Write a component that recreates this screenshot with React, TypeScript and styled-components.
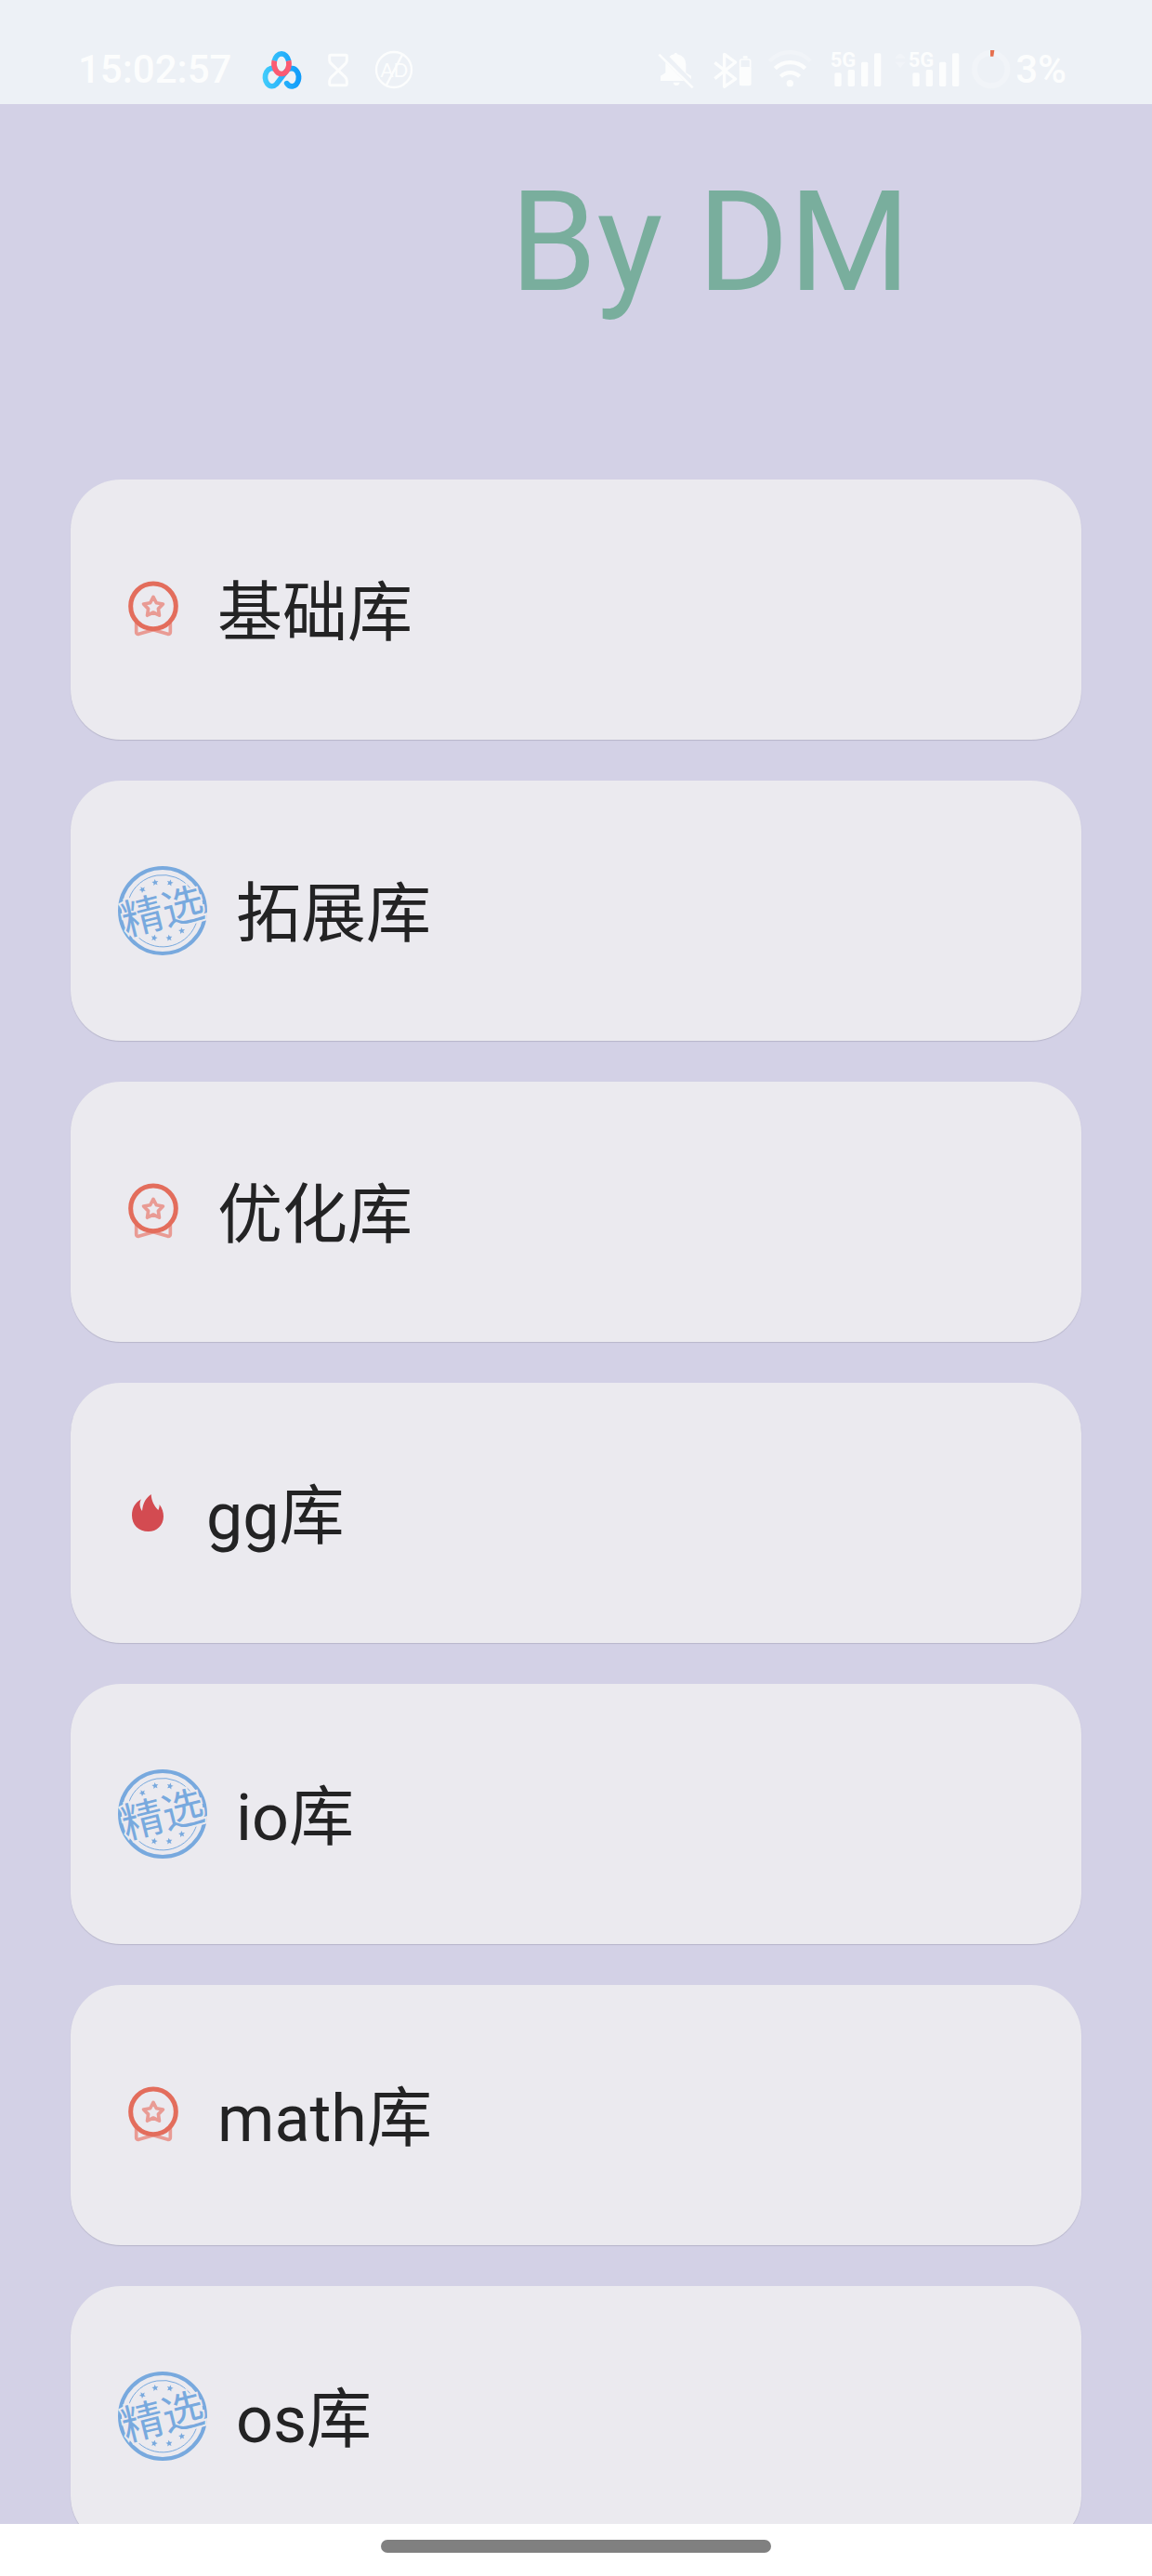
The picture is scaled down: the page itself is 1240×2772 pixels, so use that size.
import React from "react";
import styled, { createGlobalStyle } from "styled-components";

const ink = "#fcfdfd";
const cardColor = "#ebeaef";
const stampColor = "#78a9de";

const GlobalStyle = createGlobalStyle`
  *, *::before, *::after { box-sizing: border-box; }
  body { margin: 0; background: #ffffff; font-family: Roboto, "Noto Sans CJK SC", sans-serif; }
`;

const Screen = styled.div`
  display: flex;
  flex-direction: column;
  height: 100vh;
  background: #d3d1e6;
`;

const StatusBar = styled.header`
  display: flex;
  flex: none;
  justify-content: space-between;
  align-items: center;
  height: 112px;
  padding: 38px 92px 0 84px;
  background: #edf1f6;
  color: ${ink};
  font-size: 42px;
  font-weight: 500;
  line-height: 44px;
`;

const StatusGroup = styled.div<{ $gap: number }>`
  display: flex;
  align-items: center;
  gap: ${(p) => p.$gap}px;
`;

const Glyph = styled.svg<{ $width: number }>`
  display: block;
  flex: none;
  width: ${(p) => p.$width}px;
  height: 44px;
  overflow: visible;
`;

const Content = styled.main`
  flex: 1;
  min-height: 0;
  overflow-y: auto;
  scrollbar-width: none;
  padding: 0 76px;
`;

const Title = styled.h1`
  margin: 0;
  padding: 61px 0 167px 473px;
  color: #79ae9d;
  font-size: 150px;
  font-weight: 400;
  line-height: 176px;
  white-space: nowrap;
`;

const CardList = styled.ul`
  display: flex;
  flex-direction: column;
  gap: 44px;
  margin: 0;
  padding: 0;
  list-style: none;
`;

const Card = styled.button`
  display: flex;
  align-items: center;
  gap: 31px;
  width: 100%;
  height: 280px;
  padding: 0 51px;
  border: 0;
  border-radius: 54px;
  background: ${cardColor};
  box-shadow: 0 1px 1px rgba(60, 60, 80, 0.18);
  color: #232324;
  font-family: inherit;
  font-size: 70px;
  line-height: 84px;
  text-align: left;
  cursor: pointer;
`;

const CardLabel = styled.span`
  padding-top: 8px;
`;

const CardIcon = styled.svg<{ $size: number }>`
  display: block;
  flex: none;
  width: ${(p) => p.$size}px;
  height: ${(p) => p.$size}px;
  overflow: visible;
`;

const NavBar = styled.footer`
  display: flex;
  flex: none;
  justify-content: center;
  height: 56px;
  padding-top: 17px;
  background: #ffffff;
`;

const Handle = styled.div`
  width: 420px;
  height: 14px;
  border-radius: 7px;
  background: #808080;
`;

function starPoints(cx: number, cy: number, outer: number, inner: number, turn = 0) {
  return Array.from({ length: 10 }, (_, i) => {
    const r = i % 2 ? inner : outer;
    const a = ((i * 36 - 90 + turn) * Math.PI) / 180;
    return `${(cx + r * Math.cos(a)).toFixed(1)},${(cy + r * Math.sin(a)).toFixed(1)}`;
  }).join(" ");
}

function MedalIcon() {
  return (
    <CardIcon $size={76} viewBox="51 54 228 228" fill="none" aria-hidden="true">
      <path
        d="M110 208V240Q110 248 118 247L165 233L212 247Q220 248 220 240V208"
        stroke="#e99b94"
        strokeWidth="11"
        strokeLinejoin="round"
      />
      <circle cx="165" cy="157" r="73" stroke="#e36d5c" strokeWidth="15" />
      <polygon
        points={starPoints(165, 160, 33, 17)}
        stroke="#e99b94"
        strokeWidth="11"
        strokeLinejoin="round"
      />
    </CardIcon>
  );
}

const stampStars = [
  [130, 172, -30],
  [171, 149, -8],
  [219, 150, 14],
  [168, 328, 14],
  [216, 328, -8],
  [257, 305, -8],
];

function StampIcon() {
  return (
    <CardIcon $size={96} viewBox="51 96 288 288" fill="none" aria-hidden="true">
      <circle cx="195" cy="240" r="138" stroke={stampColor} strokeWidth="12" />
      <path
        d="M87 200A115 115 0 0 1 285 168M118 327A115 115 0 0 0 306 272"
        stroke={stampColor}
        strokeWidth="3"
      />
      {stampStars.map(([x, y, turn]) => (
        <polygon key={`${x}-${y}`} points={starPoints(x, y, 11, 5, turn)} fill={stampColor} />
      ))}
      <text
        x="195"
        y="290"
        textAnchor="middle"
        transform="rotate(-14 195 240)"
        fontFamily='"Noto Sans CJK SC", sans-serif'
        fontSize="134"
        fill={stampColor}
        stroke={cardColor}
        strokeWidth="12"
        paintOrder="stroke"
      >
        精选
      </text>
    </CardIcon>
  );
}

function FlameIcon() {
  return (
    <CardIcon $size={64} viewBox="51 108 192 192" aria-hidden="true">
      <path
        fill="#d34b51"
        d="M126 160C119 172 121 187 129 198C131 172 142 155 158 144C159 165 168 182 181 195C184 189 185 184 185 177C194 189 198 203 198 215C198 244 176 264 149 264C118 264 96 242 96 212C96 189 107 170 126 160Z"
      />
    </CardIcon>
  );
}

function CloudDiskGlyph() {
  return (
    <Glyph $width={44} viewBox="658 66 132 132" fill="none" aria-hidden="true">
      <defs>
        <linearGradient id="disk" gradientUnits="userSpaceOnUse" x1="662" y1="150" x2="786" y2="150">
          <stop offset="0" stopColor="#43cdfb" />
          <stop offset="1" stopColor="#0f9bfa" />
        </linearGradient>
      </defs>
      <g stroke="url(#disk)" strokeWidth="17">
        <path
          d="M704 131A22 29 0 1 0 707 179L738 139C743 131 749 128 755 128A22 29 0 1 1 741 176"
          strokeLinecap="round"
          strokeLinejoin="round"
        />
        <path d="M701 104A24 33 0 0 1 747 104" />
      </g>
      <path d="M701 103A24 33 0 1 0 747 103" stroke="#fb5a72" strokeWidth="17" />
    </Glyph>
  );
}

function HourglassGlyph() {
  return (
    <Glyph $width={24} viewBox="871 66 72 132" fill="none" stroke={ink} strokeWidth="9" aria-hidden="true">
      <path d="M884 85H931Q935 85 935 89V102Q935 108 930 113L885 156Q879 162 879 168V178Q879 182 884 182H931Q935 182 935 178V168Q935 162 930 156L885 113Q879 108 879 102V89Q879 85 884 85Z" />
    </Glyph>
  );
}

function NoAdsGlyph() {
  return (
    <Glyph $width={42} viewBox="1027 66 126 132" fill="none" aria-hidden="true">
      <circle cx="1090" cy="132" r="57" stroke={ink} strokeWidth="7" />
      <path d="M1117 84L1066 181" stroke={ink} strokeWidth="7" />
      <text x="1091" y="155" textAnchor="middle" fontSize="62" fontWeight="400" fontFamily="Lato, sans-serif" fill={ink}>
        AD
      </text>
    </Glyph>
  );
}

function MutedBellGlyph() {
  return (
    <Glyph $width={46} viewBox="78 66 138 132" aria-hidden="true">
      <path
        fill={ink}
        d="M134 82Q134 77 139 77Q144 77 144 82Q172 88 172 116V142L189 152V163L118 90Q124 84 134 82ZM106 108L166 168H90V152L106 142ZM131 173H152Q150 183 141 183Q133 183 131 173Z"
      />
      <path d="M85 83L194 190" stroke={ink} strokeWidth="8" />
    </Glyph>
  );
}

function BluetoothGlyph() {
  return (
    <Glyph $width={48} viewBox="252 66 144 132" fill="none" aria-hidden="true">
      <path d="M265 109L332 162L296 187V82L332 108L265 161" stroke={ink} strokeWidth="10" strokeLinejoin="round" />
      <rect x="356" y="88" width="15" height="7" rx="3" fill={ink} />
      <rect x="347" y="99" width="33" height="82" rx="5" stroke={ink} strokeWidth="5" />
      <rect x="345" y="123" width="37" height="60" rx="4" fill={ink} />
    </Glyph>
  );
}

function WifiGlyph() {
  return (
    <Glyph $width={52} viewBox="432 66 156 132" fill="none" strokeWidth="13" aria-hidden="true">
      <path d="M442 104C479 66 537 66 574 104" stroke="#f1f4f8" />
      <path d="M460 128C487 102 530 102 557 128" stroke={ink} />
      <path d="M478 154C495 137 522 137 539 154" stroke={ink} />
      <circle cx="508" cy="176" r="11" fill={ink} />
    </Glyph>
  );
}

const bars = [
  { x: 14, y: 142 },
  { x: 57, y: 132 },
  { x: 100, y: 107 },
  { x: 142, y: 79 },
];

function SignalGlyph({ arrows }: { arrows?: boolean }) {
  return (
    <Glyph
      $width={arrows ? 72 : 62}
      viewBox={arrows ? "-44 66 216 132" : "-14 66 186 132"}
      fill={ink}
      aria-hidden="true"
    >
      {arrows && <path d="M-42 95Q-26 65 -10 95ZM-42 107H-10L-26 127Z" fill="#f1f4f8" />}
      <text x="0" y="124" fontSize="66" fontWeight="700" fontFamily="Roboto, sans-serif">
        5G
      </text>
      {bars.map((b) => (
        <rect key={b.x} x={b.x} y={b.y} width="22" height={186 - b.y} rx="5" />
      ))}
    </Glyph>
  );
}

function BatteryRing() {
  return (
    <Glyph $width={40} viewBox="1098 66 120 132" fill="none" aria-hidden="true">
      <circle cx="1157" cy="131" r="53" stroke="#f1f4f8" strokeWidth="18" />
      <path d="M1155 69H1168L1165 89H1155Z" fill="#e5704f" />
    </Glyph>
  );
}

const icons = { medal: MedalIcon, stamp: StampIcon, flame: FlameIcon };

const libraries: { name: string; icon: keyof typeof icons }[] = [
  { name: "基础库", icon: "medal" },
  { name: "拓展库", icon: "stamp" },
  { name: "优化库", icon: "medal" },
  { name: "gg库", icon: "flame" },
  { name: "io库", icon: "stamp" },
  { name: "math库", icon: "medal" },
  { name: "os库", icon: "stamp" },
];

export default function App() {
  return (
    <Screen>
      <GlobalStyle />
      <StatusBar>
        <StatusGroup $gap={32}>
          <time>15:02:57</time>
          <StatusGroup $gap={27}>
            <CloudDiskGlyph />
            <HourglassGlyph />
            <NoAdsGlyph />
          </StatusGroup>
        </StatusGroup>
        <StatusGroup $gap={12}>
          <MutedBellGlyph />
          <BluetoothGlyph />
          <WifiGlyph />
          <SignalGlyph />
          <SignalGlyph arrows />
          <StatusGroup $gap={6}>
            <BatteryRing />
            <span>3%</span>
          </StatusGroup>
        </StatusGroup>
      </StatusBar>
      <Content>
        <Title>By DM</Title>
        <CardList>
          {libraries.map(({ name, icon }) => {
            const Icon = icons[icon];
            return (
              <li key={name}>
                <Card type="button">
                  <Icon />
                  <CardLabel>{name}</CardLabel>
                </Card>
              </li>
            );
          })}
        </CardList>
      </Content>
      <NavBar>
        <Handle />
      </NavBar>
    </Screen>
  );
}
